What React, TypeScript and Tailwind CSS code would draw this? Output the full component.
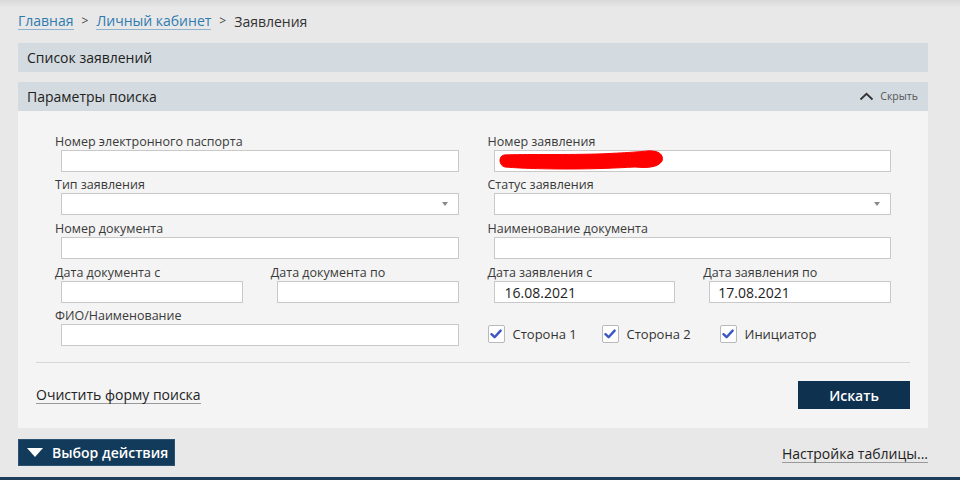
import React from "react";

const font = { fontFamily: '"Open Sans", "Noto Sans", sans-serif' };

const Field = ({ label, children }: { label: string; children?: React.ReactNode }) => (
    <div className="flex flex-col">
        <div className="h-4 text-[12.5px] leading-4 text-[#3a3a3a] whitespace-nowrap">{label}</div>
        <div className="ml-[6px] h-[22px] bg-white border border-[#c9c9c9] relative flex items-center">
            {children}
        </div>
    </div>
);

const SelectArrow = () => (
    <span className="absolute right-[10px] top-[8px] w-0 h-0 border-l-[3px] border-r-[3px] border-t-[4px] border-l-transparent border-r-transparent border-t-[#8a8a8a]" />
);

const Check = ({ label }: { label: string }) => (
    <div className="flex items-center gap-[8px]">
        <div className="w-[17px] h-[18px] bg-white border border-[#b9b9b9] rounded-[2px] flex items-center justify-center">
            <svg width="12" height="10" viewBox="0 0 12 10">
                <path d="M1.5 5.2 L4.6 8.2 L10.6 1.6" fill="none" stroke="#3b55c4" strokeWidth="2.4" strokeLinecap="round" strokeLinejoin="round" />
            </svg>
        </div>
        <span className="text-[13px] text-[#333]">{label}</span>
    </div>
);

export default function App() {
    return (
        <div className="w-[960px] h-[480px] overflow-hidden bg-[#e8e8e8] relative" style={font}>
            <div className="absolute top-0 left-0 right-0 h-[8px] bg-gradient-to-b from-[#d9d9d9] to-[#e8e8e8]" />
            <div className="relative flex flex-col pl-[18px] pr-[32px]">
                {/* breadcrumbs */}
                <div className="h-[43px] flex items-center pb-[1px] text-[14px]">
                    <span className="text-[#2f7bb0] border-b border-[#8fb3cf] leading-[17px]">Главная</span>
                    <span className="text-[#444] mx-[8px] text-[12px]">&gt;</span>
                    <span className="text-[#2f7bb0] border-b border-[#8fb3cf] leading-[17px]">Личный кабинет</span>
                    <span className="text-[#444] mx-[8px] text-[12px]">&gt;</span>
                    <span className="text-[#333] leading-[17px]">Заявления</span>
                </div>

                <div className="h-[29px] bg-[#d3dbe0] flex items-center pl-[9px] text-[14px] text-[#222]">
                    Список заявлений
                </div>

                <div className="mt-[10px] h-[29px] bg-[#d3dbe0] flex items-center justify-between pl-[9px] pr-[10px] text-[14px] text-[#222]">
                    <span>Параметры поиска</span>
                    <span className="flex items-center gap-[6px] text-[10.5px] text-[#555]">
                        <svg width="15" height="9" viewBox="0 0 15 9">
                            <polyline points="1.5,7.5 7.5,1.8 13.5,7.5" fill="none" stroke="#333" strokeWidth="1.8" />
                        </svg>
                        Скрыть
                    </span>
                </div>

                {/* form */}
                <div className="bg-[#f4f4f4] pt-[23px] pb-[19px] px-[18px]">
                    <div className="grid grid-cols-2 gap-x-[29px] gap-y-[5px] px-[19px]">
                        <Field label="Номер электронного паспорта" />
                        <Field label="Номер заявления">
                            <svg className="absolute left-[2px] top-[-2px]" width="170" height="24" viewBox="0 0 170 24">
                                <path d="M7 6 C30 5 60 6 100 5 C125 4 140 3 150 2 C162 1 167 6 165 12 C161 19 148 19 138 18 C118 19 100 20 70 20 C40 20 20 19 8 18 C2 17 1 7 7 6 Z" fill="#ff0000" stroke="#ff0000" strokeWidth="1" strokeLinejoin="round" />
                            </svg>
                        </Field>
                        <Field label="Тип заявления">
                            <SelectArrow />
                        </Field>
                        <Field label="Статус заявления">
                            <SelectArrow />
                        </Field>
                        <div className="pt-[1px]">
                            <Field label="Номер документа" />
                        </div>
                        <div className="pt-[1px]">
                            <Field label="Наименование документа" />
                        </div>
                        <div className="grid grid-cols-2 gap-x-[28px] pt-[1px]">
                            <Field label="Дата документа с" />
                            <Field label="Дата документа по" />
                        </div>
                        <div className="grid grid-cols-2 gap-x-[28px] pt-[1px]">
                            <Field label="Дата заявления с">
                                <span className="pl-[10px] text-[14px] text-[#222]">16.08.2021</span>
                            </Field>
                            <Field label="Дата заявления по">
                                <span className="pl-[8px] text-[14px] text-[#222]">17.08.2021</span>
                            </Field>
                        </div>
                        <Field label="ФИО/Наименование" />
                        <div className="flex items-end pb-[2px]">
                            <div className="flex items-center">
                                <div className="w-[114px]"><Check label="Сторона 1" /></div>
                                <div className="w-[118px]"><Check label="Сторона 2" /></div>
                                <Check label="Инициатор" />
                            </div>
                        </div>
                    </div>

                    <div className="mt-[16px] border-t border-[#d6d6d6]" />

                    <div className="mt-[18px] flex items-center justify-between">
                        <span className="text-[14px] text-[#222] border-b border-[#9a9a9a] leading-[17px]">
                            Очистить форму поиска
                        </span>
                        <button className="w-[112px] h-[28px] bg-[#0f3150] text-white text-[14px] font-semibold">
                            Искать
                        </button>
                    </div>
                </div>

                {/* bottom actions */}
                <div className="mt-[11px] flex items-center justify-between">
                    <button className="h-[27px] w-[157px] bg-[#123a5a] border border-[#2c5272] text-white text-[14px] font-semibold flex items-center pl-[8px] gap-[9px]">
                        <span className="w-0 h-0 border-l-[8px] border-r-[8px] border-t-[9px] border-l-transparent border-r-transparent border-t-white" />
                        Выбор действия
                    </button>
                    <span className="text-[14px] text-[#222] border-b border-[#9a9a9a] leading-[17px] mt-[2px]">
                        Настройка таблицы...
                    </span>
                </div>
            </div>
            <div className="absolute bottom-0 left-0 right-0 h-[3px] bg-[#1d3d5a]" />
        </div>
    );
}
